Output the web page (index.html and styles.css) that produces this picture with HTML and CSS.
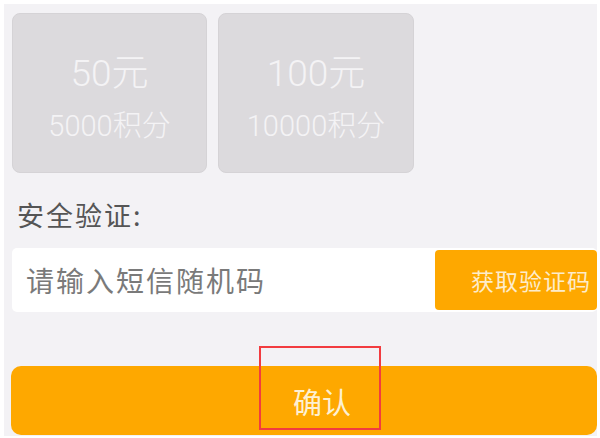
FILE: index.html
```html
<!DOCTYPE html>
<html lang="zh-CN">
<head>
  <meta charset="UTF-8">
  <title>积分兑换</title>
  <link rel="stylesheet" href="styles.css">
</head>
<body>
  <div class="screen">
    <div class="cards">
      <div class="card">
        <div class="amount">50元</div>
        <div class="points">5000积分</div>
      </div>
      <div class="card">
        <div class="amount">100元</div>
        <div class="points">10000积分</div>
      </div>
    </div>

    <div class="label">安全验证:</div>

    <div class="code-row">
      <input type="text" class="code-input" placeholder="请输入短信随机码" />
      <button class="code-btn">获取验证码</button>
    </div>

    <button class="confirm">确认</button>

    <div class="highlight"></div>
  </div>
</body>
</html>
```

FILE: styles.css
```css
body {
  margin: 0;
  background-color: #ffffff;
  font-family: Roboto, "Noto Sans CJK SC", sans-serif;
}

.screen {
  position: relative;
  margin: 4px 3px 0 4px;
  height: 432px;
  background-color: #f3f2f5;
  padding: 9px 0 0 8px;
  box-sizing: border-box;
}

.cards {
  display: flex;
  gap: 11px;
}

.card {
  width: 195px;
  height: 160px;
  box-sizing: border-box;
  background-color: #dcdadd;
  border: 1px solid #d5d3d6;
  border-radius: 8px;
  color: #f4f3f5;
  font-weight: 300;
  display: flex;
  flex-direction: column;
  align-items: center;
  padding-top: 38px;
}

.card + .card {
  width: 196px;
}

.amount {
  font-size: 37px;
  line-height: 44px;
}

.points {
  font-size: 29px;
  line-height: 40px;
  margin-top: 10px;
}

.label {
  margin: 24px 0 0 5px;
  font-family: "Noto Sans CJK SC", sans-serif;
  font-size: 27px;
  line-height: 36px;
  letter-spacing: 2px;
  color: #555555;
}

.code-row {
  display: flex;
  align-items: center;
  height: 64px;
  margin-top: 15px;
  background-color: #ffffff;
  border-radius: 5px;
}

.code-input {
  flex: 1;
  min-width: 0;
  height: 100%;
  border: none;
  background: transparent;
  padding: 0 0 0 14px;
  font-family: "Noto Sans CJK SC", sans-serif;
  font-size: 28px;
  letter-spacing: 2px;
  outline: none;
}

.code-input::placeholder {
  color: #7a7a7a;
}

.code-btn {
  flex: 0 0 162px;
  height: 60px;
  border: none;
  border-radius: 4px;
  background-color: #fea800;
  color: #fdeccb;
  font-family: "Noto Sans CJK SC", sans-serif;
  font-size: 23px;
  letter-spacing: 1px;
  padding: 0 0 0 30px;
  display: flex;
  align-items: center;
  justify-content: center;
}

.confirm {
  display: flex;
  align-items: center;
  justify-content: center;
  width: 586px;
  height: 69px;
  margin: 54px 0 0 -1px;
  border: none;
  border-radius: 10px;
  background-color: #fea800;
  color: #fdf0d2;
  font-family: "Noto Sans CJK SC", sans-serif;
  font-size: 29px;
  padding: 0 0 0 36px;
}

.highlight {
  position: absolute;
  left: 255px;
  top: 342px;
  width: 118px;
  height: 80px;
  border: 2px solid #f23c3f;
}
```
